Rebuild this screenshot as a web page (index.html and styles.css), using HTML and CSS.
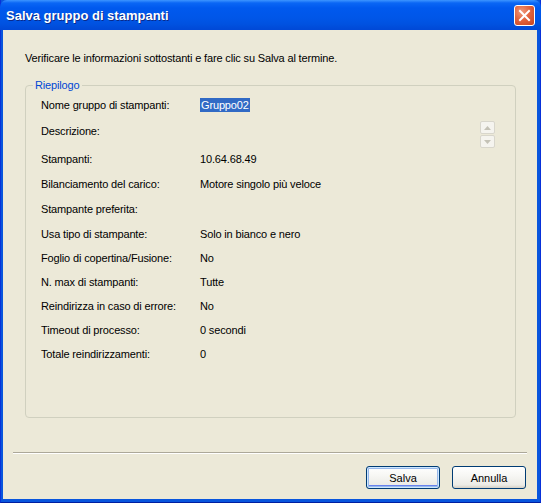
FILE: index.html
```html
<!DOCTYPE html>
<html lang="it">
<head>
<meta charset="utf-8">
<title>Salva gruppo di stampanti</title>
<link rel="stylesheet" href="styles.css">
</head>
<body>
<div class="window">
  <div class="titlebar">
    <span class="title">Salva gruppo di stampanti</span>
    <button class="close" aria-label="Chiudi">
      <svg width="13" height="13" viewBox="0 0 13 13"><path d="M2 2 L11 11 M11 2 L2 11" stroke="#fff" stroke-width="2" stroke-linecap="square"/></svg>
    </button>
  </div>
  <div class="client">
    <p class="intro">Verificare le informazioni sottostanti e fare clic su Salva al termine.</p>
    <fieldset class="group">
      <legend>Riepilogo</legend>
      <div class="rows">
        <div class="row h24"><span class="label">Nome gruppo di stampanti:</span><span class="value"><span class="sel">Gruppo02</span></span></div>
        <div class="row desc"><span class="label">Descrizione:</span><span class="value"></span>
          <div class="spin">
            <span class="sbtn"><svg width="7" height="4" viewBox="0 0 7 4"><path d="M0 4 L3.5 0 L7 4Z" fill="#c4c2b6"/></svg></span>
            <span class="sbtn"><svg width="7" height="4" viewBox="0 0 7 4"><path d="M0 0 L3.5 4 L7 0Z" fill="#c4c2b6"/></svg></span>
          </div>
        </div>
        <div class="row h25"><span class="label">Stampanti:</span><span class="value">10.64.68.49</span></div>
        <div class="row h25"><span class="label">Bilanciamento del carico:</span><span class="value">Motore singolo più veloce</span></div>
        <div class="row h25"><span class="label">Stampante preferita:</span><span class="value"></span></div>
        <div class="row h24"><span class="label">Usa tipo di stampante:</span><span class="value">Solo in bianco e nero</span></div>
        <div class="row h24"><span class="label">Foglio di copertina/Fusione:</span><span class="value">No</span></div>
        <div class="row h24"><span class="label">N. max di stampanti:</span><span class="value">Tutte</span></div>
        <div class="row h24"><span class="label">Reindirizza in caso di errore:</span><span class="value">No</span></div>
        <div class="row h24"><span class="label">Timeout di processo:</span><span class="value">0 secondi</span></div>
        <div class="row h24"><span class="label">Totale reindirizzamenti:</span><span class="value">0</span></div>
      </div>
    </fieldset>
    <div class="separator"></div>
    <div class="buttons">
      <button class="btn default">Salva</button>
      <button class="btn">Annulla</button>
    </div>
  </div>
</div>
</body>
</html>
```
FILE: styles.css
```css
html, body {
  margin: 0;
  padding: 0;
  background: #ffffff;
}
.window {
  width: 541px;
  height: 503px;
  box-sizing: border-box;
  display: flex;
  flex-direction: column;
  background: #0855dd;
  border-left: 1px solid #0831d9;
  border-right: 1px solid #0831d9;
  border-bottom: 1px solid #001ea0;
  font-family: "Liberation Sans", Arial, sans-serif;
  font-size: 11px;
  color: #000;
}
.titlebar {
  height: 30px;
  flex: none;
  display: flex;
  align-items: center;
  padding: 0 6px 0 6px;
  background: linear-gradient(#3d95ff 0, #0a66f5 3px, #0059ee 8px, #0056e8 18px, #0052e0 24px, #0048d6 30px);
  border-radius: 7px 7px 0 0;
  margin: 0 -1px;
}
.title {
  color: #fff;
  font-family: "Liberation Sans", Arial, sans-serif;
  font-weight: bold;
  font-size: 13px;
  text-shadow: 1px 1px 0 #0a2a8a;
  flex: 1;
  padding-top: 1px;
}
.close {
  width: 21px;
  height: 21px;
  padding: 0;
  border: 1px solid #fff;
  border-radius: 3px;
  background: radial-gradient(circle at 35% 30%, #f09a7d 0, #e2643f 45%, #c8431f 100%);
  display: flex;
  align-items: center;
  justify-content: center;
  margin-top: 1px;
}
.client {
  flex: 1;
  margin: 0 3px 3px 2px;
  background: #ece9d8;
  display: flex;
  flex-direction: column;
  letter-spacing: -0.15px;
}
.intro {
  margin: 22px 0 0 22px;
  line-height: 13px;
  height: 13px;
}
.group {
  margin: 14px 21px 0 22px;
  padding: 0;
  border: 1px solid #d0d0bf;
  border-radius: 4px;
  box-sizing: border-box;
}
.group legend {
  color: #0046d5;
  padding: 0 2px;
  margin-left: 7px;
  line-height: 13px;
}
.rows {
  padding: 1px 20px 51px 15px;
  display: flex;
  flex-direction: column;
}
.row {
  display: flex;
  align-items: center;
}
.h24 { height: 24px; }
.h25 { height: 25px; }
.row.desc {
  height: 30px;
  align-items: flex-start;
}
.row.desc .label {
  padding-top: 8px;
}
.label {
  width: 159px;
  flex: none;
  line-height: 13px;
}
.value {
  flex: 1;
  line-height: 13px;
}
.sel {
  background: #316ac5;
  color: #fff;
  padding: 1px 1px;
}
.spin {
  display: flex;
  flex-direction: column;
  gap: 1px;
  margin-top: 4px;
}
.sbtn {
  width: 13px;
  height: 11px;
  border: 1px solid #d8d6cc;
  border-radius: 2px;
  background: #f5f4ef;
  display: flex;
  align-items: center;
  justify-content: center;
}
.separator {
  margin: 34px 10px 0 10px;
  height: 1px;
  background: #aca899;
  border-bottom: 1px solid #fff;
}
.buttons {
  display: flex;
  justify-content: flex-end;
  gap: 12px;
  margin: 12px 11px 0 0;
}
.btn {
  width: 74px;
  height: 23px;
  border: 1px solid #003c74;
  border-radius: 3px;
  background: linear-gradient(#ffffff 0, #f7f7f4 40%, #ecebe6 85%, #d6d0c5 100%);
  font-family: "Liberation Sans", Arial, sans-serif;
  font-size: 11px;
  color: #000;
  padding: 0;
}
.btn.default {
  box-shadow: inset 0 0 0 1px #cee7ff, inset 0 0 0 2px #98b8ea, inset 0 -2px 0 1px #6982ee;
}
```
